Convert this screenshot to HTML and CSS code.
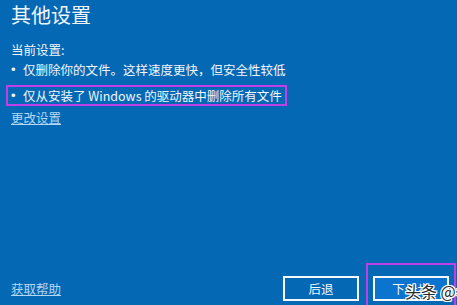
FILE: index.html
```html
<!DOCTYPE html>
<html lang="zh-CN">
<head>
<meta charset="utf-8">
<title>其他设置</title>
<link rel="stylesheet" href="styles.css">
</head>
<body>
<div class="page">
  <main class="content">
    <h1 class="title">其他设置</h1>
    <p class="label">当前设置:</p>
    <ul class="list">
      <li class="item"><span class="dot">•</span><span>仅删除你的文件。这样速度更快，但安全性较低</span></li>
      <li class="item item-marked"><span class="dot">•</span><span>仅从安装了 Windows 的驱动器中删除所有文件</span></li>
    </ul>
    <a class="link" href="#">更改设置</a>
  </main>
  <footer class="footer">
    <a class="link" href="#">获取帮助</a>
    <div class="buttons">
      <button class="btn">后退</button>
      <div class="next-wrap">
        <button class="btn btn-primary">下一步</button>
      </div>
    </div>
  </footer>
</div>
<div class="watermark">头条 @考</div>
</body>
</html>
```
FILE: styles.css
```css
html, body {
  margin: 0;
  padding: 0;
  height: 100%;
  overflow: hidden;
}
body {
  background: #0568b5;
  color: #f2f6fb;
  font-family: "Noto Sans CJK SC", "Noto Sans", sans-serif;
  font-size: 12.5px;
  position: relative;
}
.page {
  height: 305px;
  display: flex;
  flex-direction: column;
}
.content {
  padding: 3px 0 0 11px;
  display: flex;
  flex-direction: column;
  align-items: flex-start;
}
.title {
  margin: 0;
  font-size: 20px;
  line-height: 24px;
  font-weight: normal;
}
.label {
  margin: 13px 0 0;
  line-height: 20px;
}
.list {
  list-style: none;
  margin: 0;
  padding: 0;
}
.item {
  display: flex;
  line-height: 20px;
}
.dot {
  width: 12px;
  font-family: "Liberation Sans", sans-serif;
  font-size: 13px;
}
.item-marked {
  margin: 5px 0 0 -5px;
  padding: 0 3px;
  line-height: 17px;
  border: 2px solid #c040e8;
}
.link {
  color: #b4d7f2;
  text-decoration: underline;
  line-height: 20px;
  margin-top: 2px;
}
.footer {
  margin-top: auto;
  display: flex;
  align-items: center;
  justify-content: space-between;
  padding: 0 8px 4px 11px;
}
.footer .link {
  margin-top: 0;
}
.buttons {
  display: flex;
  gap: 14px;
}
.btn {
  width: 76px;
  height: 25px;
  box-sizing: border-box;
  border: 2px solid #f4f8fc;
  background: transparent;
  color: #f2f6fb;
  font-family: inherit;
  font-size: 12.5px;
  padding: 0;
}
.btn-primary {
  background: #0b74cf;
}
.next-wrap {
  position: relative;
  display: flex;
}
.next-wrap::after {
  content: "";
  position: absolute;
  left: -7px;
  right: -7px;
  top: -13px;
  bottom: -12px;
  border: 2px solid #c040e8;
  pointer-events: none;
}
.watermark {
  position: absolute;
  left: 405px;
  top: 280px;
  font-size: 16px;
  line-height: 22px;
  color: #2a2a2a;
  white-space: nowrap;
  text-shadow: 1px 0 0 #fff, -1px 0 0 #fff, 0 1px 0 #fff, 0 -1px 0 #fff, 1px 1px 0 #fff, -1px -1px 0 #fff, 1px -1px 0 #fff, -1px 1px 0 #fff;
}
```
